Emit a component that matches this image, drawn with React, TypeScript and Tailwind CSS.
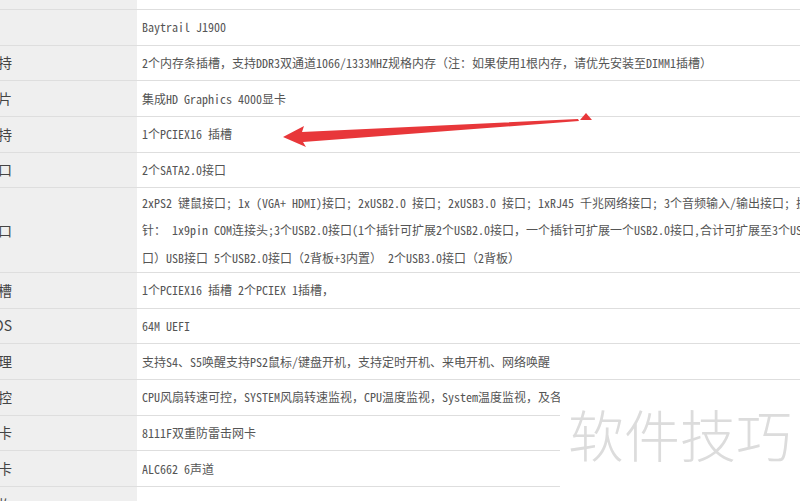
const rows: { label: string; lines: string[] }[] = [
  { label: 'CPU', lines: [''] },
  { label: '', lines: ['Baytrail J1900'] },
  { label: '内存支持', lines: ['2个内存条插槽，支持DDR3双通道1066/1333MHZ规格内存（注：如果使用1根内存，请优先安装至DIMM1插槽）'] },
  { label: '显示芯片', lines: ['集成HD Graphics 4000显卡'] },
  { label: '显卡支持', lines: ['1个PCIEX16 插槽'] },
  { label: '存储接口', lines: ['2个SATA2.0接口'] },
  {
    label: '外部接口',
    lines: [
      '2xPS2 键鼠接口; 1x (VGA+ HDMI)接口; 2xUSB2.0 接口; 2xUSB3.0 接口; 1xRJ45 千兆网络接口; 3个音频输入/输出接口; 扩展接口',
      '针： 1x9pin COM连接头;3个USB2.0接口(1个插针可扩展2个USB2.0接口，一个插针可扩展一个USB2.0接口,合计可扩展至3个USB2.0接',
      '口）USB接口 5个USB2.0接口（2背板+3内置） 2个USB3.0接口（2背板）',
    ],
  },
  { label: '扩展插槽', lines: ['1个PCIEX16 插槽 2个PCIEX 1插槽，'] },
  { label: '板载BIOS', lines: ['64M UEFI'] },
  { label: '电源管理', lines: ['支持S4、S5唤醒支持PS2鼠标/键盘开机，支持定时开机、来电开机、网络唤醒'] },
  { label: '硬件监控', lines: ['CPU风扇转速可控，SYSTEM风扇转速监视，CPU温度监视，System温度监视，及各'] },
  { label: '板载网卡', lines: ['8111F双重防雷击网卡'] },
  { label: '板载声卡', lines: ['ALC662 6声道'] },
  { label: '板型结构', lines: [''] },
]

export default function App() {
  return (
    <div className="relative w-[800px] h-[501px] overflow-hidden bg-white">
      <div className="-mt-[25.67px] w-[1200px]">
        {rows.map((row, i) => (
          <div
            key={i}
            className={`flex border-b border-[#dedede] ${row.lines.length > 1 ? 'h-[84.67px]' : 'h-[35.67px]'}`}
          >
            {/* label column, text clipped on the left */}
            <div className="w-[137px] shrink-0 bg-[#efefef] flex items-center overflow-hidden">
              <span className="block -ml-[108px] w-[120px] text-right whitespace-nowrap text-[14px] text-[#444] font-['Noto_Sans_CJK_SC',sans-serif]">
                {row.label}
              </span>
            </div>
            <div className="flex-1 flex flex-col justify-center pl-[5px] text-[12px] leading-[27.7px] text-[#555] font-['Noto_Sans_Mono_CJK_SC','Liberation_Mono','Noto_Sans_CJK_SC',monospace]">
              {row.lines.map((line, j) => (
                <div key={j} className="whitespace-nowrap">
                  {line}
                </div>
              ))}
            </div>
          </div>
        ))}
      </div>

      {/* red arrow drawn over the table */}
      <svg className="absolute left-0 top-0 pointer-events-none" width="800" height="501" viewBox="0 0 800 501">
        <polygon
          points="283,137 304,126 302,132 578,119 579,121 303,142 306,147"
          fill="#e8373a"
        />
        <polygon points="586,113 580,120 592,120" fill="#e8373a" />
      </svg>

      {/* watermark */}
      <div className="absolute left-[560px] top-[381px] w-[240px] h-[120px] bg-white flex items-start pt-[24px] pl-[8px]">
        <span className="text-[56px] leading-none font-light text-[#dcdcdc] whitespace-nowrap font-['Noto_Sans_CJK_SC',sans-serif]">
          软件技巧
        </span>
      </div>
    </div>
  )
}
